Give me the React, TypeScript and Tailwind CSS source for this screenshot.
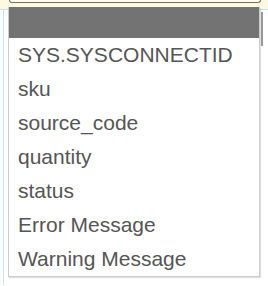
import React from 'react';

const options = [
  'SYS.SYSCONNECTID',
  'sku',
  'source_code',
  'quantity',
  'status',
  'Error Message',
  'Warning Message',
];

export default function App() {
  return (
    <div
      className="relative w-[268px] h-[286px] overflow-hidden bg-white"
      style={{ fontFamily: '"Liberation Sans", Arial, sans-serif' }}
    >
      {/* page behind the dropdown */}
      <div className="flex flex-col">
        <div className="h-[10px] bg-[#fdf9e0] border-b border-[#c6e2f7]">
          <div className="ml-[9px] w-[252px] h-[3px] rounded-b-[3px] border-b border-x border-[#707070] bg-[#fffde6]" />
        </div>
        <div className="flex h-[275px]">
          <div className="ml-[3px] w-px bg-[#c6e2f7]" />
          <div className="flex-1" />
          <div className="mt-[2px] mr-[5px] w-[2px] h-[34px] bg-[#9a9a9a]" />
        </div>
      </div>

      {/* dropdown menu */}
      <div className="absolute left-[8px] top-[7px] w-[252px] border-x border-b border-[#cccccc] bg-white shadow-[1px_1px_1px_rgba(0,0,0,0.12)]">
        <div className="h-[31px] bg-[#737373]" />
        <ul>
          {options.map((o) => (
            <li key={o} className="h-[34px] pl-[9px] leading-[34px] text-[21px] text-[#555555] whitespace-nowrap">
              {o}
            </li>
          ))}
        </ul>
      </div>
    </div>
  );
}
